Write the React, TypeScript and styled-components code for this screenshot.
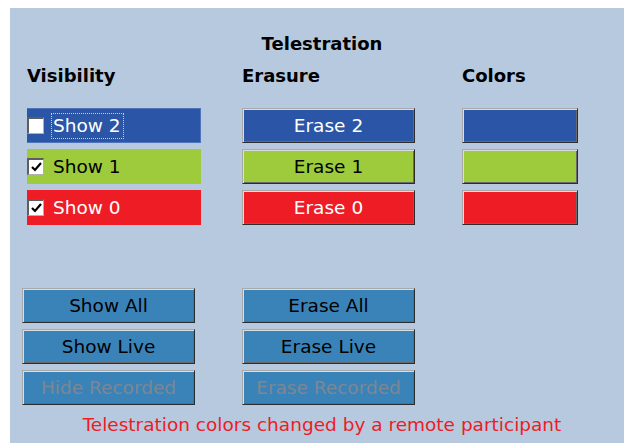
import React from "react";
import styled, { createGlobalStyle, css } from "styled-components";

const Global = createGlobalStyle`
  html, body { margin: 0; padding: 0; background: #ffffff; }
  body { font-family: "DejaVu Sans", Verdana, sans-serif; }
`;

const Panel = styled.div`
  margin: 8px 0 0 10px;
  height: 435px;
  background: #b7c9df;
  padding: 25px 0 0 12px;
  box-sizing: border-box;
`;

const Inner = styled.div`
  width: 600px;
  display: flex;
  flex-direction: column;
`;

const Title = styled.div`
  font-weight: bold;
  font-size: 18px;
  line-height: 22px;
  color: #000;
  text-align: center;
`;

const Grid = styled.div`
  display: grid;
  grid-template-columns: 220px 220px 116px;
  margin-top: 10px;
`;

const Heading = styled.div<{ $indent?: boolean }>`
  font-weight: bold;
  font-size: 18px;
  line-height: 22px;
  color: #000;
  margin-left: ${(p) => (p.$indent ? "5px" : "0")};
`;

const Column = styled.div<{ $indent?: boolean }>`
  display: flex;
  flex-direction: column;
  gap: 6px;
  margin-top: 21px;
  margin-left: ${(p) => (p.$indent ? "5px" : "0")};
`;

const swatch = {
  blue: { bg: "#2b56a8", fg: "#ffffff" },
  green: { bg: "#9dcb3b", fg: "#000000" },
  red: { bg: "#ee1c25", fg: "#ffffff" },
} as const;
type Swatch = keyof typeof swatch;

const VisRow = styled.div<{ $c: Swatch }>`
  width: 174px;
  height: 35px;
  box-sizing: border-box;
  display: flex;
  align-items: center;
  background: ${(p) => swatch[p.$c].bg};
  color: ${(p) => swatch[p.$c].fg};
  border: 1px solid ${(p) => (p.$c === "blue" ? "#4f74ba" : "transparent")};
  border-left: none;
`;

const Box = styled.span`
  width: 17px;
  height: 17px;
  box-sizing: border-box;
  background: #fff;
  border-top: 2px solid #5e5e5e;
  border-left: 2px solid #5e5e5e;
  border-right: 1px solid #b0b0b0;
  border-bottom: 1px solid #b0b0b0;
  display: flex;
  align-items: center;
  justify-content: center;
  flex: none;
`;

const Label = styled.span<{ $focus?: boolean }>`
  margin-left: 7px;
  padding: 1px 2px 1px 1px;
  font-size: 18.5px;
  line-height: 22px;
  border: 1px dotted ${(p) => (p.$focus ? "#e2df3a" : "transparent")};
`;

const raised = css`
  box-sizing: border-box;
  border-style: solid;
  border-width: 1px;
  border-color: #a9a9a9 #2c2c2c #2c2c2c #a9a9a9;
  box-shadow: inset 1px 1px 0 #dcdcdc, inset -1px -1px 0 #6a6a6a;
`;

const Button = styled.div<{ $bg: string; $fg: string; $w?: number }>`
  ${raised};
  width: ${(p) => p.$w ?? 173}px;
  height: 35px;
  background: ${(p) => p.$bg};
  color: ${(p) => p.$fg};
  font-size: 18.5px;
  line-height: 22px;
  display: flex;
  align-items: center;
  justify-content: center;
  white-space: nowrap;
`;

const Actions = styled.div`
  display: grid;
  grid-template-columns: 220px 220px;
  margin-top: 63px;
`;

const ActionCol = styled.div`
  display: flex;
  flex-direction: column;
  gap: 6px;
`;

const Message = styled.div`
  margin-top: 9px;
  text-align: center;
  color: #ee1c25;
  font-size: 18.5px;
  line-height: 22px;
`;

const Check = () => (
  <svg width="11" height="10" viewBox="0 0 11 10">
    <path d="M1 5 L4 8 L10 1" fill="none" stroke="#000" strokeWidth="2.2" />
  </svg>
);

const rows: { c: Swatch; n: number; checked: boolean }[] = [
  { c: "blue", n: 2, checked: false },
  { c: "green", n: 1, checked: true },
  { c: "red", n: 0, checked: true },
];

const BTN = "#3a83b8";
const DIS = "#7d8793";

export default function App() {
  return (
    <>
      <Global />
      <Panel>
        <Inner>
          <Title>Telestration</Title>
          <Grid>
            <Heading $indent>Visibility</Heading>
            <Heading>Erasure</Heading>
            <Heading>Colors</Heading>
            <Column $indent>
              {rows.map((r) => (
                <VisRow key={r.n} $c={r.c}>
                  <Box>{r.checked && <Check />}</Box>
                  <Label $focus={r.n === 2}>Show {r.n}</Label>
                </VisRow>
              ))}
            </Column>
            <Column>
              {rows.map((r) => (
                <Button key={r.n} $bg={swatch[r.c].bg} $fg={swatch[r.c].fg}>
                  Erase {r.n}
                </Button>
              ))}
            </Column>
            <Column>
              {rows.map((r) => (
                <Button key={r.n} $bg={swatch[r.c].bg} $fg={swatch[r.c].fg} $w={116} />
              ))}
            </Column>
          </Grid>
          <Actions>
            <ActionCol>
              <Button $bg={BTN} $fg="#000">Show All</Button>
              <Button $bg={BTN} $fg="#000">Show Live</Button>
              <Button $bg={BTN} $fg={DIS}>Hide Recorded</Button>
            </ActionCol>
            <ActionCol>
              <Button $bg={BTN} $fg="#000">Erase All</Button>
              <Button $bg={BTN} $fg="#000">Erase Live</Button>
              <Button $bg={BTN} $fg={DIS}>Erase Recorded</Button>
            </ActionCol>
          </Actions>
          <Message>Telestration colors changed by a remote participant</Message>
        </Inner>
      </Panel>
    </>
  );
}
